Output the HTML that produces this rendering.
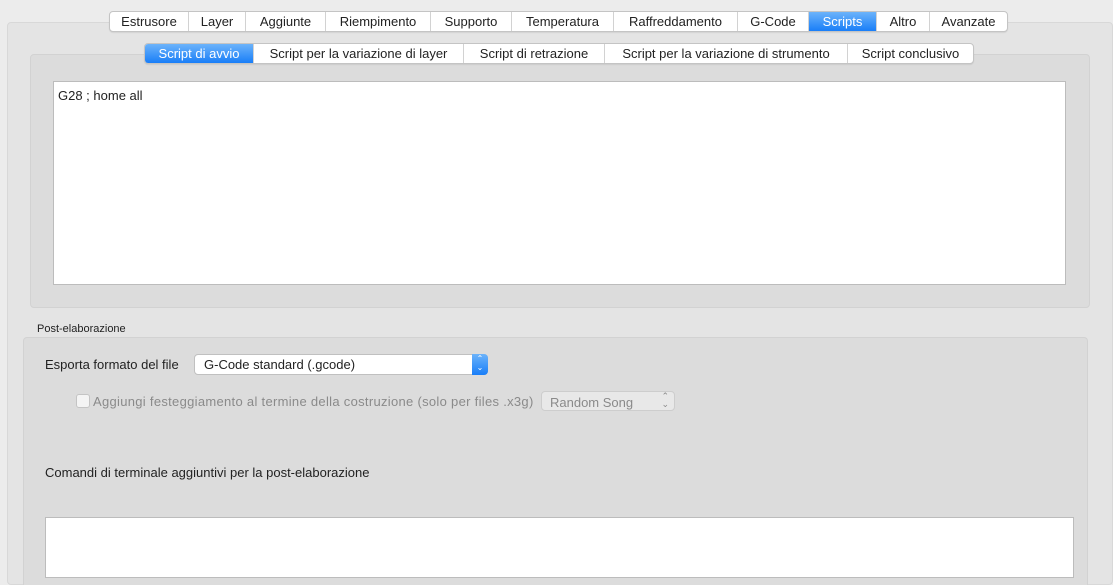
<!DOCTYPE html><html style="overflow:hidden;height:585px"><head><style>
body{margin:0;width:1113px;height:585px;background:#ececec;font-family:"Liberation Sans",sans-serif;font-size:13px;color:#222;position:relative;overflow:hidden}
.a{position:absolute}
.tabs{position:absolute;display:flex;height:19px;border:1px solid #c4c4c4;border-radius:4px;background:#fff;overflow:hidden;box-shadow:0 1px 1px rgba(0,0,0,.08)}
.tabs div{border-right:1px solid #d2d2d2;text-align:center;line-height:19px;box-sizing:border-box}
.tabs div:last-child{border-right:none}
.sel{background:linear-gradient(#6cb3fa,#197ef8);color:#fff}
</style></head><body>
<div class="a" style="left:7px;top:22px;width:1106px;height:563px;background:#e4e4e4;border:1px solid #d8d8d8;border-radius:4px;box-sizing:border-box"></div>
<div class="tabs" style="left:109px;top:11px;width:897px">
<div style="width:79px">Estrusore</div><div style="width:57px">Layer</div><div style="width:80px">Aggiunte</div><div style="width:105px">Riempimento</div><div style="width:81px">Supporto</div><div style="width:102px">Temperatura</div><div style="width:124px">Raffreddamento</div><div style="width:71px">G-Code</div><div class="sel" style="width:68px">Scripts</div><div style="width:53px">Altro</div><div style="width:77px">Avanzate</div></div>
<div class="a" style="left:30px;top:54px;width:1058px;height:252px;background:#dcdcdc;border:1px solid #d2d2d2;border-radius:4px"></div>
<div class="tabs" style="left:144px;top:43px;width:828px">
<div class="sel" style="width:109px">Script di avvio</div><div style="width:210px">Script per la variazione di layer</div><div style="width:141px">Script di retrazione</div><div style="width:243px">Script per la variazione di strumento</div><div style="width:125px">Script conclusivo</div></div>
<div class="a" style="left:53px;top:81px;width:1011px;height:202px;background:#fff;border:1px solid #bcbcbc"></div>
<div class="a" style="left:58px;top:88px">G28 ; home all</div>
<div class="a" style="left:37px;top:323px;font-size:11px">Post-elaborazione</div>
<div class="a" style="left:23px;top:337px;width:1065px;height:248px;background:#dcdcdc;border:1px solid #d2d2d2;border-bottom:none;border-radius:4px 4px 0 0;box-sizing:border-box"></div>
<div class="a" style="left:45px;top:357px">Esporta formato del file</div>
<div class="a" style="left:194px;top:354px;width:294px;height:21px;background:#fff;border:1px solid #c0c0c0;border-radius:4px;box-sizing:border-box"><span style="position:absolute;left:9px;top:2px">G-Code standard (.gcode)</span><div style="position:absolute;right:-1px;top:-1px;width:16px;height:21px;background:linear-gradient(#6cb3fa,#197ef8);border-radius:0 4px 4px 0;color:#fff;font-size:8px;text-align:center;line-height:9px">⌃<br>⌄</div></div>
<div class="a" style="left:76px;top:394px;width:12px;height:12px;background:#f4f4f4;border:1px solid #c4c4c4;border-radius:3px"></div>
<div class="a" style="left:93px;top:394px;color:#8a8a8a;letter-spacing:0.3px">Aggiungi festeggiamento al termine della costruzione (solo per files .x3g)</div>
<div class="a" style="left:541px;top:391px;width:134px;height:20px;background:#e8e8e8;border:1px solid #cdcdcd;border-radius:4px;box-sizing:border-box;color:#8a8a8a"><span style="position:absolute;left:8px;top:3px">Random Song</span><span style="position:absolute;right:5px;top:0px;font-size:9px;line-height:8px">⌃<br>⌄</span></div>
<div class="a" style="left:45px;top:465px">Comandi di terminale aggiuntivi per la post-elaborazione</div>
<div class="a" style="left:45px;top:517px;width:1027px;height:59px;background:#fff;border:1px solid #bcbcbc"></div>
</body></html>
